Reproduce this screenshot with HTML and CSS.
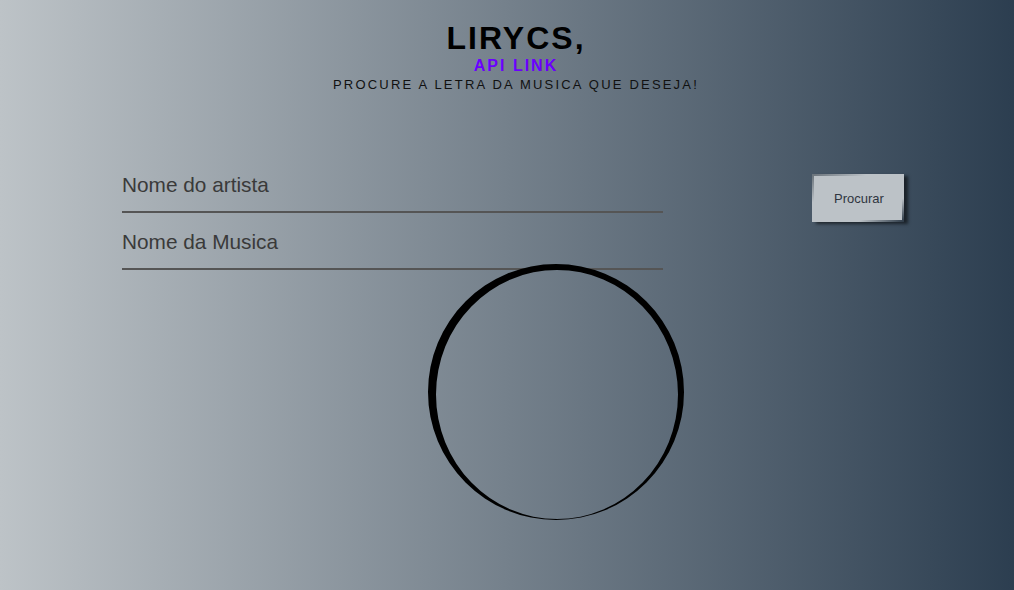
FILE: index.html
```html
<!DOCTYPE html>
<html lang="pt">
<head>
<meta charset="utf-8">
<title>Lirycs</title>
<link rel="stylesheet" href="styles.css">
</head>
<body>
<header class="header">
  <h1 class="title">LIRYCS,</h1>
  <a class="api-link">API LINK</a>
  <p class="subtitle">PROCURE A LETRA DA MUSICA QUE DESEJA!</p>
</header>
<form class="search">
  <div class="fields">
    <input class="field" type="text" placeholder="Nome do artista">
    <input class="field" type="text" placeholder="Nome da Musica">
  </div>
  <button class="btn" type="button">Procurar</button>
</form>
<div class="loader">
  <svg width="256" height="256" viewBox="0 0 256 256">
    <path fill="#000" fill-rule="evenodd" d="M0 128a128 128 0 1 0 256 0a128 128 0 1 0 -256 0Z M8 130.5a121 124.5 0 1 0 242 0a121 124.5 0 1 0 -242 0Z"/>
  </svg>
</div>
</body>
</html>
```
FILE: styles.css
```css
html, body {
  margin: 0;
  height: 100%;
}
body {
  background: linear-gradient(to right, #bdc3c7, #2c3e50);
  font-family: "Liberation Sans", Arial, sans-serif;
  position: relative;
  overflow: hidden;
}
.header {
  padding-top: 20px;
  padding-left: 16px;
  display: flex;
  flex-direction: column;
  align-items: center;
}
.title {
  margin: 0;
  font-size: 32px;
  line-height: 36px;
  letter-spacing: 2px;
  font-weight: bold;
  color: #000;
  padding-left: 2px;
}
.api-link {
  margin-top: 1px;
  font-size: 16px;
  line-height: 18px;
  font-weight: bold;
  letter-spacing: 2px;
  color: #6b00ff;
  padding-left: 2px;
}
.subtitle {
  margin: 2px 0 0;
  font-size: 13px;
  line-height: 16px;
  letter-spacing: 2.2px;
  color: #111;
  padding-left: 2px;
}
.search {
  display: flex;
  align-items: flex-start;
  gap: 149px;
  padding-left: 122px;
  margin-top: 80px;
}
.fields {
  display: flex;
  flex-direction: column;
  gap: 17px;
  width: 541px;
}
.field {
  box-sizing: border-box;
  width: 100%;
  height: 40px;
  padding: 0 0 14px 0;
  line-height: 24px;
  font-size: 20.8px;
  font-family: "Liberation Sans", Arial, sans-serif;
  background: transparent;
  border: none;
  border-bottom: 2px solid #555;
  color: #333;
  outline: none;
}
.field::placeholder {
  color: #3a3a3a;
  opacity: 1;
}
.btn {
  box-sizing: border-box;
  margin-top: 1px;
  width: 92px;
  height: 48px;
  border: 2px solid #bcc2c7;
  border-image: linear-gradient(to bottom right, #6b747c, #bcc2c7 30%, #bcc2c7 75%, #2e3b48) 1;
  background: #bcc2c7;
  color: #2f3540;
  font-size: 13px;
  font-family: "Liberation Sans", Arial, sans-serif;
  box-shadow: 4px 2px 3px rgba(0, 0, 0, 0.55);
  cursor: pointer;
  padding-left: 8px;
}
.loader {
  position: absolute;
  left: 428px;
  top: 264px;
  width: 256px;
  height: 256px;
}
.loader svg {
  display: block;
}
```
